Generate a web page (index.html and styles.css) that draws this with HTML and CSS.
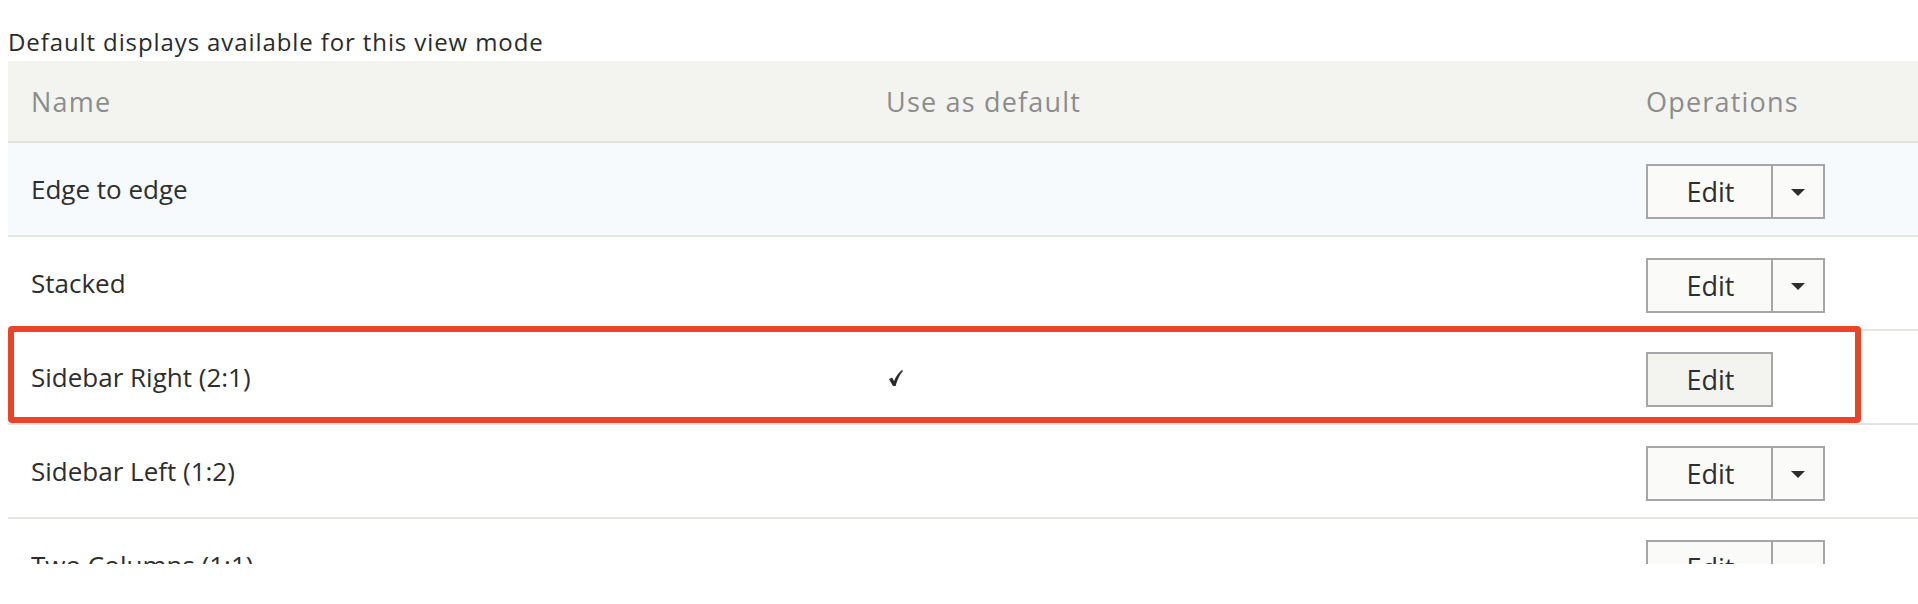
FILE: index.html
```html
<!DOCTYPE html>
<html lang="en">
<head>
<meta charset="utf-8">
<title>Default displays</title>
<link rel="stylesheet" href="styles.css">
</head>
<body>
<div class="page">
  <div class="caption">Default displays available for this view mode</div>
  <div class="table-clip">
    <div class="table">
      <div class="row head">
        <div class="cell">Name</div>
        <div class="cell">Use as default</div>
        <div class="cell">Operations</div>
      </div>
      <div class="row hover">
        <div class="cell">Edge to edge</div>
        <div class="cell"></div>
        <div class="cell"><div class="split"><span class="main">Edit</span><span class="arrow"><span class="tri"></span></span></div></div>
      </div>
      <div class="row">
        <div class="cell">Stacked</div>
        <div class="cell"></div>
        <div class="cell"><div class="split"><span class="main">Edit</span><span class="arrow"><span class="tri"></span></span></div></div>
      </div>
      <div class="row marked">
        <div class="cell">Sidebar Right (2:1)</div>
        <div class="cell"><svg class="check" viewBox="0 0 14 16" width="14" height="16" aria-label="✓"><path d="M0 9.3 L3 7.4 L5.1 11 C7.1 6 9.9 2.4 13.1 0 L14 1 C10.9 4.3 8.5 9.2 6.6 16 L4 16 Z" fill="#2b2b2b"/></svg></div>
        <div class="cell"><div class="split single"><span class="main">Edit</span></div></div>
        <div class="highlight"></div>
      </div>
      <div class="row">
        <div class="cell">Sidebar Left (1:2)</div>
        <div class="cell"></div>
        <div class="cell"><div class="split"><span class="main">Edit</span><span class="arrow"><span class="tri"></span></span></div></div>
      </div>
      <div class="row">
        <div class="cell">Two Columns (1:1)</div>
        <div class="cell"></div>
        <div class="cell"><div class="split"><span class="main">Edit</span><span class="arrow"><span class="tri"></span></span></div></div>
      </div>
    </div>
  </div>
</div>
</body>
</html>
```

FILE: styles.css
```css
html, body {
  margin: 0;
  padding: 0;
  background: #ffffff;
}

body {
  font-family: "Open Sans", "Noto Sans", sans-serif;
  color: #2e2e2e;
}

.page {
  padding: 26px 0 0 8px;
}

.caption {
  font-size: 24px;
  letter-spacing: 0.9px;
  line-height: 32px;
  height: 32px;
  margin-bottom: 3px;
  color: #2b2b2b;
  white-space: nowrap;
}

.table-clip {
  height: 503px;
  overflow: hidden;
}

.table {
  display: flex;
  flex-direction: column;
}

.row {
  position: relative;
  display: grid;
  grid-template-columns: 855px 760px 1fr;
  align-items: center;
  height: 92px;
  border-bottom: 2px solid #e6e6e1;
  background: #ffffff;
  font-size: 26px;
}

.row.head {
  height: 80px;
  background: #f3f4ef;
  border-bottom-color: #e3e3dd;
  color: #8c8c8c;
  font-size: 27px;
  letter-spacing: 1.2px;
}

.row.hover {
  background: #f6fafd;
}

.cell {
  padding-left: 23px;
  white-space: nowrap;
}

.row:not(.head) .cell:nth-child(3) {
  padding-top: 4px;
}

.split {
  display: inline-flex;
  height: 55px;
  box-sizing: border-box;
  border: 2px solid #a6a6a6;
  background: #fafaf8;
  color: #2e2e2e;
  vertical-align: middle;
}

.split.single {
  background: #f3f4ef;
}

.split .main {
  width: 123px;
  display: flex;
  align-items: center;
  justify-content: center;
  font-size: 27px;
  padding-left: 2px;
  box-sizing: border-box;
}

.split .arrow {
  width: 52px;
  border-left: 2px solid #a6a6a6;
  box-sizing: border-box;
  display: flex;
  align-items: center;
  justify-content: center;
}

.tri {
  width: 0;
  height: 0;
  border-left: 7px solid transparent;
  border-right: 7px solid transparent;
  border-top: 7px solid #2e2e2e;
  margin-top: 2px;
}

.check {
  display: block;
  margin-left: 3px;
  margin-top: 2px;
}

.highlight {
  position: absolute;
  left: 0;
  top: -5px;
  width: 1853px;
  height: 97px;
  box-sizing: border-box;
  border: 6px solid #e9432b;
  border-radius: 4px;
  pointer-events: none;
}
```
